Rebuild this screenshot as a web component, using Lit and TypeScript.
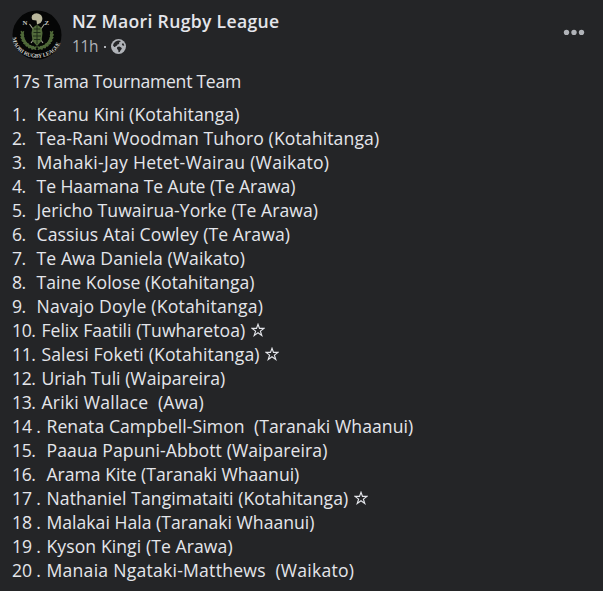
import { LitElement, css, html, svg } from 'lit';
import { customElement, property } from 'lit/decorators.js';

interface Player {
  no: string;
  name: string;
  // x range the name covers in the post
  from: number;
  to: number;
  star?: boolean;
}

const TEAM: Player[] = [
  { no: '1.', name: 'Keanu Kini (Kotahitanga)', from: 36.5, to: 239.5 },
  { no: '2.', name: 'Tea-Rani Woodman Tuhoro (Kotahitanga)', from: 36.5, to: 379.3 },
  { no: '3.', name: 'Mahaki-Jay Hetet-Wairau (Waikato)', from: 36.5, to: 329.3 },
  { no: '4.', name: 'Te Haamana Te Aute (Te Arawa)', from: 36.5, to: 295.3 },
  { no: '5.', name: 'Jericho Tuwairua-Yorke (Te Arawa)', from: 36.5, to: 318 },
  { no: '6.', name: 'Cassius Atai Cowley (Te Arawa)', from: 36.5, to: 290 },
  { no: '7.', name: 'Te Awa Daniela (Waikato)', from: 36.5, to: 245 },
  { no: '8.', name: 'Taine Kolose (Kotahitanga)', from: 36.5, to: 254.5 },
  { no: '9.', name: 'Navajo Doyle (Kotahitanga)', from: 36.5, to: 263 },
  { no: '10.', name: 'Felix Faatili (Tuwharetoa)', from: 41.4, to: 245.2, star: true },
  { no: '11.', name: 'Salesi Foketi (Kotahitanga)', from: 41.4, to: 259.7, star: true },
  { no: '12.', name: 'Uriah Tuli (Waipareira)', from: 41.4, to: 225.3 },
  { no: '13.', name: 'Ariki Wallace  (Awa)', from: 41.4, to: 204 },
  { no: '14 .', name: 'Renata Campbell-Simon  (Taranaki Whaanui)', from: 46.5, to: 413.3 },
  { no: '15.', name: 'Paaua Papuni-Abbott (Waipareira)', from: 46.5, to: 327.5 },
  { no: '16.', name: 'Arama Kite (Taranaki Whaanui)', from: 46.5, to: 299.3 },
  { no: '17 .', name: 'Nathaniel Tangimataiti (Kotahitanga)', from: 46.5, to: 348.3, star: true },
  { no: '18 .', name: 'Malakai Hala (Taranaki Whaanui)', from: 46.5, to: 314.5 },
  { no: '19 .', name: 'Kyson Kingi (Te Arawa)', from: 46.5, to: 232.7 },
  { no: '20 .', name: 'Manaia Ngataki-Matthews  (Waikato)', from: 46.5, to: 354.3 },
];

const FAMILY = '"Open Sans", "Noto Sans", sans-serif';
const pen = document.createElement('canvas').getContext('2d')!;

// Text set to a fixed measure by adjusting the tracking
@customElement('fit-text')
export class FitText extends LitElement {
  @property() text = '';
  @property({ type: Number }) width = 0;
  @property({ type: Number }) size = 17.6;
  @property({ type: Number }) weight = 400;

  static styles = css`
    :host {
      display: inline-block;
      flex: none;
      white-space: pre;
      font-family: 'Open Sans', 'Noto Sans', sans-serif;
    }
  `;

  render() {
    pen.font = `${this.weight} ${this.size}px ${FAMILY}`;
    const gap = (this.width - pen.measureText(this.text).width) / this.text.length;
    return html`<span
      style="font-size:${this.size}px;font-weight:${this.weight};letter-spacing:${gap.toFixed(3)}px"
      >${this.text}</span
    >`;
  }
}

@customElement('app-root')
export class AppRoot extends LitElement {
  static styles = css`
    :host {
      display: block;
      box-sizing: border-box;
      height: 591px;
      padding: 10px 12px 0;
      overflow: hidden;
      background: #242527;
      color: #e4e6eb;
      font-family: 'Open Sans', 'Noto Sans', sans-serif;
    }

    header {
      display: flex;
      height: 50px;
    }

    .avatar {
      width: 50px;
      height: 50px;
      flex: none;
    }

    .who {
      flex: 1;
      margin-left: 10px;
    }

    .page {
      display: flex;
      height: 24px;
      line-height: 23px;
    }

    .meta {
      display: flex;
      align-items: center;
      height: 24px;
      line-height: 24px;
      color: #b0b3b8;
    }

    .dot {
      width: 2px;
      height: 2px;
      margin: 1px 5px 0 6px;
      background: currentColor;
    }

    .globe {
      width: 15px;
      height: 15px;
      margin-top: 1px;
    }

    .more {
      width: 22px;
      height: 6px;
      margin: 19px 6px 0 0;
      fill: #b0b3b8;
    }

    .title {
      display: flex;
      height: 24px;
      margin-top: 9px;
      line-height: 24px;
    }

    .team {
      margin: 9px 0 0;
      padding: 0;
      list-style: none;
    }

    .player {
      display: flex;
      height: 24px;
      line-height: 24px;
    }

    .no {
      flex: none;
    }

    .star {
      width: 14px;
      height: 14px;
      margin: 5px 0 0 5.5px;
    }
  `;

  render() {
    return html`
      <header>
        ${this.renderAvatar()}
        <div class="who">
          <div class="page">
            <fit-text text="NZ Maori Rugby League" width="207.5" size="17.6" weight="600"></fit-text>
          </div>
          <div class="meta">
            <fit-text text="11h" width="26" size="15.5"></fit-text>
            <span class="dot"></span>
            ${this.renderGlobe()}
          </div>
        </div>
        <svg class="more" viewBox="0 0 22 6">
          <circle cx="3.5" cy="3.5" r="2.7" />
          <circle cx="11" cy="3.5" r="2.7" />
          <circle cx="18.5" cy="3.5" r="2.7" />
        </svg>
      </header>
      <div class="title">
        <fit-text text="17s Tama Tournament Team" width="229"></fit-text>
      </div>
      <ul class="team">
        ${TEAM.map((player) => this.renderPlayer(player))}
      </ul>
    `;
  }

  private renderPlayer(player: Player) {
    const digits = player.no.replace(/\D/g, '').length;
    const width = digits * 9.8 + (player.no.includes(' ') ? 9 : 4);
    return html`<li class="player">
      <span class="no" style="width:${player.from - 12}px"
        ><fit-text .text=${player.no} .width=${width}></fit-text
      ></span>
      <fit-text .text=${player.name} .width=${player.to - player.from}></fit-text>
      ${player.star
        ? html`<svg class="star" viewBox="0 0 14 14">
            <path
              d="M7 1.3 8.5 5.4H13L9.4 8.1 10.8 12.5 7 9.8 3.2 12.5 4.6 8.1 1 5.4H5.5Z"
              fill="none"
              stroke="#e4e6eb"
              stroke-width="1.15"
            />
          </svg>`
        : ''}
    </li>`;
  }

  private renderGlobe() {
    return html`<svg class="globe" viewBox="0 0 15 15">
      <circle cx="7.5" cy="7.5" r="7.5" fill="#b0b3b8" />
      <path
        d="M2.6 4.4Q4.2 1.9 7 1.5L9.3 1.7 9.6 2.8 8 3.6 8.2 4.9 6.5 5.6 6 6.7 4.4 6.9 4.6 7.9 3.3 8.1 2 6.6Z"
        fill="#242527"
      />
      <path d="M6.2 8 8.2 7.6 10.2 8.6 10.9 9.8 9.6 11.2 8.7 13.1 7.5 13.3 7.3 11.2 6 9.8Z" fill="#242527" />
      <path d="M11.4 4.2 12.6 4.6 13.3 6.6 12 6.8 10.9 5.7Z" fill="#242527" />
    </svg>`;
  }

  private renderAvatar() {
    // leaves of the left half of the wreath, mirrored for the right one
    const leaves = [186, 174, 162, 150, 138, 126, 114, 102].map((deg) => {
      const a = (deg * Math.PI) / 180;
      const x = 25 + 14.6 * Math.cos(a);
      const y = 25 + 13.2 * Math.sin(a);
      return svg`<ellipse cx=${x} cy=${y} rx="3.3" ry="1.05" transform="rotate(${deg - 125} ${x} ${y})" />
        <ellipse cx=${x} cy=${y} rx="3" ry="0.9" transform="rotate(${deg - 65} ${x} ${y})" />`;
    });
    return html`<svg class="avatar" viewBox="0 0 50 50">
      <defs>
        <path id="rim" d="M0.8 27.5A24.2 20.2 0 0 0 49.2 27.5" />
      </defs>
      <circle cx="25" cy="25" r="24.5" fill="#050606" />
      <g fill="#58743f" opacity="0.9">
        <g>${leaves}</g>
        <g transform="translate(50 0) scale(-1 1)">${leaves}</g>
      </g>
      <path d="M17.5 14 31 33M32.5 14 19 33" stroke="#a5a795" stroke-width="1.1" />
      <path d="M20 5.5Q24 1.5 29 5Q32 9 28.5 13L25 14.5 24.5 10.5 20.5 10Q19 8 20 5.5Z" fill="#b8b69b" />
      <path d="M20.5 18 25 14.5 29.5 18 30.5 23 29.5 31 25 36 20.5 31 19.5 23Z" fill="#526b3b" />
      <path
        d="M22 19h6M21.5 22.5h7M21 26h8M22 29.5h6M25 15v19"
        stroke="#1b2916"
        stroke-width="0.9"
      />
      <g fill="#c9c9c5" font-family="Liberation Serif, serif" font-weight="700">
        <text x="10.4" y="14.5" font-size="6.8">N</text>
        <text x="32.4" y="14.5" font-size="6.8">Z</text>
        <text font-size="5.7">
          <textPath href="#rim" textLength="64">MAORI RUGBY LEAGUE</textPath>
        </text>
      </g>
    </svg>`;
  }
}

declare global {
  interface HTMLElementTagNameMap {
    'app-root': AppRoot;
    'fit-text': FitText;
  }
}
